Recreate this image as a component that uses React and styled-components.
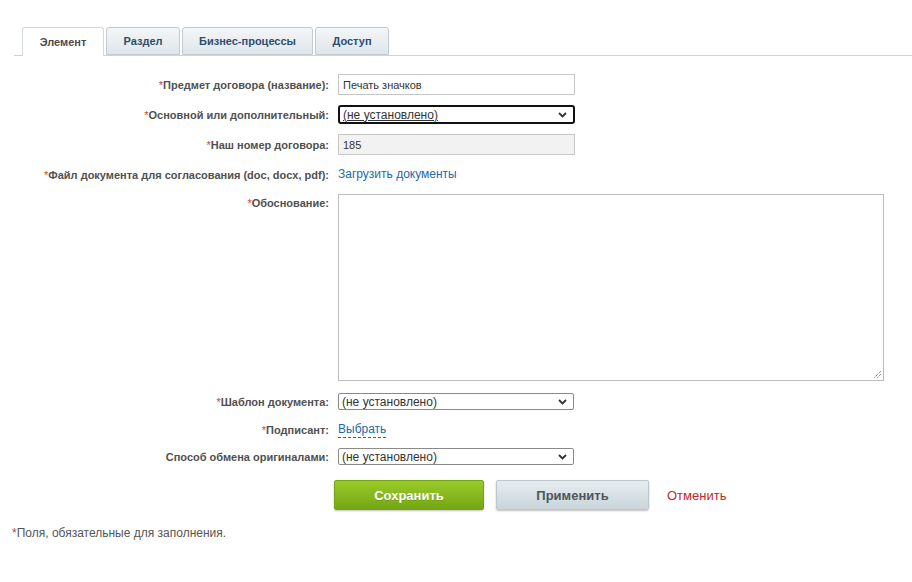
import React from "react";
import styled, { createGlobalStyle } from "styled-components";

const Global = createGlobalStyle`
  html, body { margin: 0; padding: 0; background: #fff; }
  body { font-family: "Liberation Sans", Arial, sans-serif; color: #333; }
`;

const Page = styled.div`
  width: 912px;
  height: 582px;
  overflow: hidden;
  padding-top: 27px;
  box-sizing: border-box;
`;

const TabBar = styled.div`
  display: flex;
  gap: 2px;
  margin-left: 14px;
  padding-left: 8px;
  border-bottom: 1px solid #cdd5da;
  height: 28px;
  align-items: flex-end;
`;

const Tab = styled.div`
  box-sizing: border-box;
  width: ${(p) => p.$w}px;
  height: ${(p) => (p.$active ? 29 : 28)}px;
  margin-bottom: ${(p) => (p.$active ? -1 : 0)}px;
  display: flex;
  align-items: center;
  justify-content: center;
  font-size: 11px;
  font-weight: bold;
  border: 1px solid ${(p) => (p.$active ? "#d3d9dd" : "#c1cbd1")};
  border-bottom: ${(p) => (p.$active ? "none" : "1px solid #c1cbd1")};
  border-radius: 3px 3px 0 0;
  background: ${(p) =>
    p.$active ? "#fff" : "linear-gradient(#f3f6f8, #dfe6ea)"};
  color: ${(p) => (p.$active ? "#4c4c4c" : "#2d4d6e")};
  padding-bottom: 1px;
`;

const Form = styled.div`
  margin-top: 13px;
`;

const Row = styled.div`
  display: grid;
  grid-template-columns: 329px 1fr;
  column-gap: 9px;
  padding-top: ${(p) => p.$pt ?? 5}px;
  padding-bottom: ${(p) => p.$pb ?? 5}px;
  align-items: ${(p) => (p.$top ? "start" : "center")};
`;

const Label = styled.div`
  text-align: right;
  font-size: 11px;
  font-weight: bold;
  color: #505050;
  padding-top: ${(p) => p.$pt ?? 0}px;
  white-space: nowrap;
`;

const Star = styled.span`
  color: #d0402f;
  font-weight: normal;
`;

const Input = styled.div`
  box-sizing: border-box;
  width: 237px;
  height: 21px;
  border: 1px solid #c6c6c6;
  background: ${(p) => (p.$gray ? "#f2f2f2" : "#fff")};
  font-size: 11px;
  color: #333;
  display: flex;
  align-items: center;
  padding-left: 4px;
`;

const Select = styled.div`
  position: relative;
  box-sizing: border-box;
  width: ${(p) => (p.$focus ? 237 : 236)}px;
  height: ${(p) => (p.$focus ? 19 : 17)}px;
  border: ${(p) => (p.$focus ? "2px solid #111" : "1px solid #8a8a8a")};
  border-radius: ${(p) => (p.$focus ? 3 : 2)}px;
  font-size: 12px;
  color: #333;
  display: flex;
  align-items: center;
  padding-left: 3px;
  background: #fff;
  span {
    text-decoration: ${(p) => (p.$focus ? "underline" : "none")};
    line-height: 1;
  }
`;

const Chevron = styled.svg`
  position: absolute;
  right: 6px;
  top: 50%;
  margin-top: -3px;
`;

const Link = styled.a`
  font-size: 12px;
  color: #2467a8;
  text-decoration: none;
  border-bottom: ${(p) => (p.$dashed ? "1px dashed #2467a8" : "none")};
  justify-self: start;
  line-height: ${(p) => (p.$dashed ? "15px" : "19px")};
`;

const TextArea = styled.div`
  position: relative;
  box-sizing: border-box;
  width: 546px;
  height: 187px;
  border: 1px solid #bdbdbd;
  background: #fff;
`;

const Grip = styled.svg`
  position: absolute;
  right: 1px;
  bottom: 1px;
`;

const Buttons = styled.div`
  grid-column: 2;
  display: flex;
  align-items: center;
  margin-left: -4px;
`;

const Button = styled.div`
  box-sizing: border-box;
  width: ${(p) => p.$w}px;
  height: 30px;
  border-radius: 2px;
  display: flex;
  align-items: center;
  justify-content: center;
  font-size: 13px;
  font-weight: bold;
  margin-right: ${(p) => p.$mr}px;
  ${(p) =>
    p.$primary
      ? `background: linear-gradient(#9acb2a, #74a613);
         color: #fff;
         border: 1px solid #76a316;
         box-shadow: 0 1px 2px rgba(0,0,0,0.25);
         text-shadow: 0 1px 0 rgba(0,0,0,0.15);`
      : `background: linear-gradient(#e6edf0, #c9d5da);
         color: #4d555b;
         border: 1px solid #bcc6cb;
         box-shadow: 0 1px 2px rgba(0,0,0,0.25);`}
`;

const Cancel = styled.span`
  font-size: 13px;
  color: #c0282b;
`;

const Note = styled.div`
  margin: 16px 0 0 12px;
  font-size: 12px;
  color: #555;
`;

const Arrow = () => (
  <Chevron width="9" height="6" viewBox="0 0 9 6">
    <path d="M1 1l3.5 3.5L8 1" fill="none" stroke="#333" strokeWidth="1.8" />
  </Chevron>
);

const Sel = ({ focus }) => (
  <Select $focus={focus}>
    <span>(не установлено)</span>
    <Arrow />
  </Select>
);

const Req = ({ children }) => (
  <>
    <Star>*</Star>
    {children}
  </>
);

export default function App() {
  return (
    <Page>
      <Global />
      <TabBar>
        <Tab $w={82} $active>Элемент</Tab>
        <Tab $w={74}>Раздел</Tab>
        <Tab $w={131}>Бизнес-процессы</Tab>
        <Tab $w={74}>Доступ</Tab>
      </TabBar>
      <Form>
        <Row>
          <Label><Req>Предмет договора (название):</Req></Label>
          <Input>Печать значков</Input>
        </Row>
        <Row>
          <Label><Req>Основной или дополнительный:</Req></Label>
          <Sel focus />
        </Row>
        <Row>
          <Label><Req>Наш номер договора:</Req></Label>
          <Input $gray>185</Input>
        </Row>
        <Row>
          <Label><Req>Файл документа для согласования (doc, docx, pdf):</Req></Label>
          <Link href="#">Загрузить документы</Link>
        </Row>
        <Row $top>
          <Label $pt={3}><Req>Обоснование:</Req></Label>
          <TextArea>
            <Grip width="10" height="10" viewBox="0 0 10 10">
              <path d="M9 2L2 9M9 5L5 9" stroke="#555" strokeWidth="1" strokeDasharray="1 1" />
            </Grip>
          </TextArea>
        </Row>
        <Row $pt={7}>
          <Label><Req>Шаблон документа:</Req></Label>
          <Sel />
        </Row>
        <Row $pt={7}>
          <Label><Req>Подписант:</Req></Label>
          <Link href="#" $dashed>Выбрать</Link>
        </Row>
        <Row>
          <Label>Способ обмена оригиналами:</Label>
          <Sel />
        </Row>
        <Row $pt={10} $pb={0}>
          <Buttons>
            <Button $primary $w={150} $mr={12}>Сохранить</Button>
            <Button $w={153} $mr={18}>Применить</Button>
            <Cancel>Отменить</Cancel>
          </Buttons>
        </Row>
      </Form>
      <Note><Star>*</Star>Поля, обязательные для заполнения.</Note>
    </Page>
  );
}
